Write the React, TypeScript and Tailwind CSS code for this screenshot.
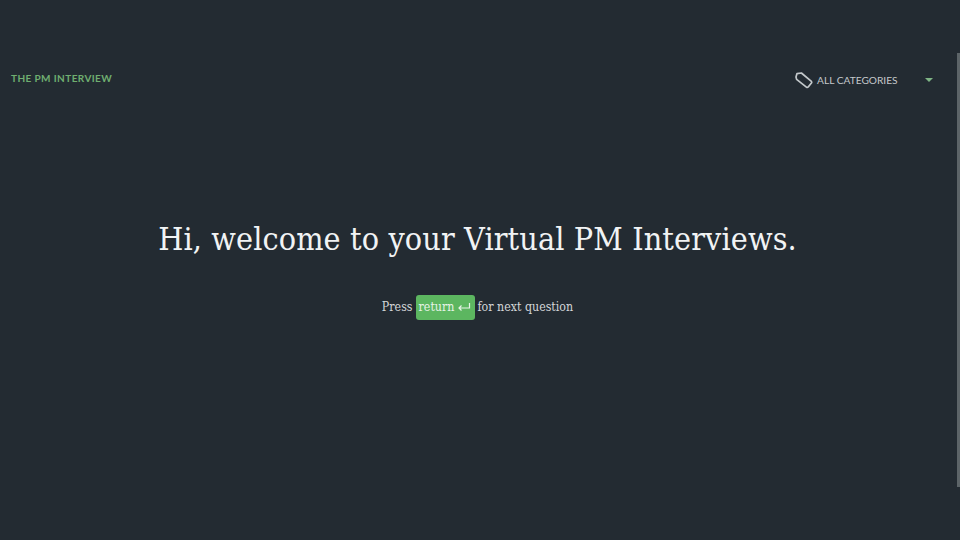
export default function App() {
  return (
    <div className="relative h-[540px] w-[960px] overflow-hidden bg-[#232b32] font-['DejaVu_Serif_Condensed','Liberation_Serif',serif]">
      <header className="flex items-start justify-between pl-[11px] pr-[27px] pt-[71px]">
        <div className="font-['Lato',sans-serif] text-[10px] font-bold leading-[14px] tracking-[0.4px] text-[#6fae70]">THE PM INTERVIEW</div>
        <div className="flex h-[18px] items-center">
          <svg width="18" height="17" viewBox="0 0 18 17" fill="none" stroke="#c3c8cb" strokeWidth="1.7" className="mr-[4px]">
            <path d="M1 5 L2 1.6 L6.4 1 L16.4 9.4 Q17 10.2 16.4 11 L13.2 15 Q12.4 15.8 11.4 15.1 L1.6 7.4 Z" strokeLinejoin="round" />
          </svg>
          <span className="w-[108px] font-['Lato',sans-serif] text-[10.2px] leading-[14px] text-[#c3c8cb]">ALL CATEGORIES</span>
          <span className="h-0 w-0 border-x-[4px] border-t-[4px] border-x-transparent border-t-[#7fb585]" />
        </div>
      </header>
      <main className="flex flex-col items-center pr-[5px] pt-[125px]">
        <h1 className="text-[32px] font-normal leading-[50px] tracking-[0.12px] text-[#f1f3f4]">Hi, welcome to your Virtual PM Interviews.</h1>
        <p className="mt-[30px] flex items-center text-[12.3px] leading-[26px] text-[#d3d6d8]">
          <span>Press</span>
          <span className="mx-[3px] flex h-[25px] w-[59px] items-center justify-center gap-[3px] rounded-[3px] bg-[#5cb660] text-[#e6f3e6]">
            return
            <svg width="14" height="10" viewBox="0 0 14 10" fill="none" stroke="#e6f3e6" strokeWidth="1.2">
              <path d="M12.5 1 V6 H2 M4.5 3.5 L2 6 L4.5 8.5" />
            </svg>
          </span>
          <span>for next question</span>
        </p>
      </main>
      <div className="absolute right-0 top-[53px] h-[434px] w-[3px] bg-[#5c6468]" />
    </div>
  );
}
